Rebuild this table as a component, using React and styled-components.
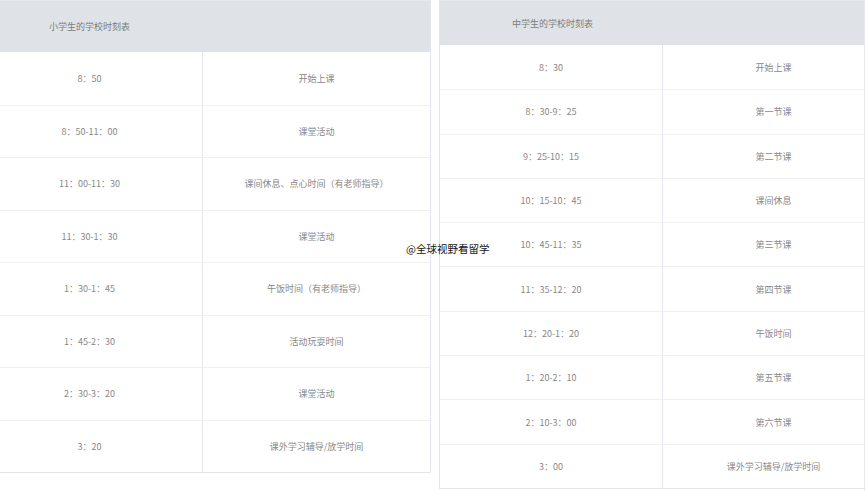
import React from "react";
import styled, { createGlobalStyle } from "styled-components";

const Global = createGlobalStyle`
  html, body { margin: 0; padding: 0; background: #fff; }
  body { font-family: "Noto Sans CJK SC", "Noto Sans", sans-serif; }
  * { box-sizing: border-box; }
`;

const Page = styled.div`
  position: relative;
  display: flex;
  align-items: flex-start;
  gap: 8px;
  width: 865px;
  height: 491px;
  overflow: hidden;
`;

const Frame = styled.div`
  flex: none;
  width: ${(p) => p.$w}px;
  overflow: hidden;
  ${(p) => (p.$edge ? "border-right: 1px solid #e8e8f0;" : "")}
  ${(p) => (p.$edge ? "height: 491px;" : "")}
`;

const Table = styled.div`
  width: ${(p) => p.$w}px;
  margin-left: ${(p) => p.$shift || 0}px;
  border-left: 1px solid #e4e4ec;
  border-right: 1px solid #e4e4ec;
  border-bottom: 1px solid #e4e4ec;
  font-size: 9px;
  color: #888;
`;

const Header = styled.div`
  height: ${(p) => p.$h}px;
  display: flex;
  align-items: center;
  padding-left: 72px;
  background: #dfe3e7;
  border-top: 1px solid #e6e9ed;
  color: #7a7d80;
`;

const Row = styled.div`
  display: grid;
  grid-template-columns: ${(p) => p.$c1}px 1fr;
  height: ${(p) => p.$h}px;
  border-top: ${(p) => (p.$first ? "none" : "1px solid #efeff4")};
`;

const Cell = styled.div`
  display: flex;
  align-items: center;
  justify-content: center;
  white-space: nowrap;
  ${(p) => (p.$divider ? "border-right: 1px solid #e6e6ee;" : "")}
`;

const Watermark = styled.div`
  position: absolute;
  left: 406px;
  top: 241px;
  font-size: 10.5px;
  color: #151515;
  white-space: nowrap;
`;

const primary = [
  ["8：50", "开始上课"],
  ["8：50-11：00", "课堂活动"],
  ["11：00-11：30", "课间休息、点心时间（有老师指导）"],
  ["11：30-1：30", "课堂活动"],
  ["1：30-1：45", "午饭时间（有老师指导）"],
  ["1：45-2：30", "活动玩耍时间"],
  ["2：30-3：20", "课堂活动"],
  ["3：20", "课外学习辅导/放学时间"],
];

const middle = [
  ["8：30", "开始上课"],
  ["8：30-9：25", "第一节课"],
  ["9：25-10：15", "第二节课"],
  ["10：15-10：45", "课间休息"],
  ["10：45-11：35", "第三节课"],
  ["11：35-12：20", "第四节课"],
  ["12：20-1：20", "午饭时间"],
  ["1：20-2：10", "第五节课"],
  ["2：10-3：00", "第六节课"],
  ["3：00", "课外学习辅导/放学时间"],
];

function Schedule({ title, rows, width, shift, headerH, rowH, col1 }) {
  return (
    <Table $w={width} $shift={shift}>
      <Header $h={headerH}>{title}</Header>
      {rows.map(([t, a], i) => (
        <Row key={i} $h={rowH} $c1={col1} $first={i === 0}>
          <Cell $divider>{t}</Cell>
          <Cell>{a}</Cell>
        </Row>
      ))}
    </Table>
  );
}

export default function App() {
  return (
    <>
      <Global />
      <Page>
        <Frame $w={431}>
          <Schedule
            title="小学生的学校时刻表"
            rows={primary}
            width={455}
            shift={-24}
            headerH={52}
            rowH={52.5}
            col1={226}
          />
        </Frame>
        <Frame $w={426} $edge>
          <Schedule
            title="中学生的学校时刻表"
            rows={middle}
            width={446}
            headerH={45}
            rowH={44.3}
            col1={223}
          />
        </Frame>
        <Watermark>@全球视野看留学</Watermark>
      </Page>
    </>
  );
}
